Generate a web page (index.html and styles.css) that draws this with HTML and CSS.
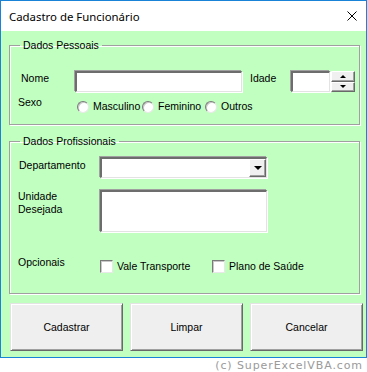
FILE: index.html
```html
<!DOCTYPE html>
<html lang="pt">
<head>
<meta charset="utf-8">
<title>Cadastro de Funcionário</title>
<link rel="stylesheet" href="styles.css">
</head>
<body>
<div class="window">
  <div class="titlebar">
    <span class="title">Cadastro de Funcionário</span>
    <svg class="close" width="10" height="10" viewBox="0 0 10 10"><path d="M0.5 0.5L9.5 9.5M9.5 0.5L0.5 9.5" stroke="#000" stroke-width="1" fill="none"/></svg>
  </div>
  <div class="content">
    <fieldset class="group group-pessoais">
      <legend>Dados Pessoais</legend>
      <div class="row row-nome">
        <span class="lbl lbl-nome">Nome</span>
        <span class="field field-nome"></span>
        <span class="lbl lbl-idade">Idade</span>
        <span class="field field-idade"></span>
        <span class="spin">
          <span class="spin-btn"><span class="tri-up"></span></span>
          <span class="spin-btn"><span class="tri-down"></span></span>
        </span>
      </div>
      <div class="row row-sexo">
        <span class="lbl lbl-sexo">Sexo</span>
        <span class="opts">
          <span class="opt opt-1"><span class="radio"></span>Masculino</span>
          <span class="opt opt-2"><span class="radio"></span>Feminino</span>
          <span class="opt opt-3"><span class="radio"></span>Outros</span>
        </span>
      </div>
    </fieldset>
    <fieldset class="group group-prof">
      <legend>Dados Profissionais</legend>
      <div class="row row-dep">
        <span class="lbl lbl-wide lbl-dep">Departamento</span>
        <span class="field combo"><span class="combo-btn"><span class="tri-down big"></span></span></span>
      </div>
      <div class="row row-uni">
        <span class="lbl lbl-wide">Unidade<br>Desejada</span>
        <span class="field area"></span>
      </div>
      <div class="row row-opc">
        <span class="lbl lbl-wide">Opcionais</span>
        <span class="opts">
          <span class="opt chk-1"><span class="check"></span>Vale Transporte</span>
          <span class="opt chk-2"><span class="check"></span>Plano de Saúde</span>
        </span>
      </div>
    </fieldset>
    <div class="buttons">
      <span class="btn">Cadastrar</span>
      <span class="btn">Limpar</span>
      <span class="btn">Cancelar</span>
    </div>
  </div>
</div>
<div class="credit">(c) SuperExcelVBA.com</div>
</body>
</html>
```

FILE: styles.css
```css
* { box-sizing: border-box; }

body {
  margin: 0;
  background: #fff;
  font-family: "Liberation Sans", Arial, sans-serif;
  font-size: 10.5px;
  color: #000;
}

.window {
  width: 367px;
  border: 1px solid #1883d7;
  background: #fff;
}

.titlebar {
  height: 30px;
  display: flex;
  align-items: center;
  justify-content: space-between;
  padding: 0 9px 0 8px;
  background: #fff;
}

.title {
  font-family: "Noto Sans", "Open Sans", sans-serif;
  font-size: 11.4px;
  color: #000;
}

.close { display: block; }

.content {
  background: #c0ffc0;
  height: 326px;
  padding: 8px 0 0 8px;
}

.group {
  margin: 0;
  width: 351px;
  padding: 0;
  border: 1px solid #a0a0a0;
  box-shadow: 1px 1px 0 #fff, inset 1px 1px 0 #fff;
  min-width: 0;
}

.group legend {
  margin-left: 10px;
  padding: 0 3px;
  line-height: 13px;
  font-size: 10.5px;
}

.group-pessoais { padding: 19px 0 11px 0; }
.group-prof { margin-top: 10px; padding: 9px 0 20px 0; }

.row {
  display: flex;
  align-items: flex-start;
  line-height: 13px;
}

.lbl { display: block; }

.row-nome { padding-left: 11px; height: 21px; }
.lbl-nome { width: 54px; margin-top: 1px; }
.lbl-idade { width: 41px; margin-left: 8px; margin-top: 1px; }

.field {
  display: block;
  background: #fff;
  border-style: solid;
  border-width: 2px 1px 1px 2px;
  border-color: #6d6d6d #e3e3e3 #e3e3e3 #6d6d6d;
  box-shadow: -1px -1px 0 #a0a0a0, 1px 1px 0 #fff;
}

.field-nome { width: 167px; height: 21px; }
.field-idade { width: 39px; height: 21px; }

.spin {
  display: flex;
  flex-direction: column;
  width: 24px;
  height: 21px;
  margin-left: 1px;
}

.spin-btn {
  flex: 1;
  display: flex;
  align-items: center;
  justify-content: center;
  background: #f0f0f0;
  border: 1px solid;
  border-color: #fff #696969 #696969 #fff;
  box-shadow: inset -1px -1px 0 #a0a0a0;
}

.tri-up {
  width: 0; height: 0;
  border-left: 3px solid transparent;
  border-right: 3px solid transparent;
  border-bottom: 3px solid #000;
}

.tri-down {
  width: 0; height: 0;
  border-left: 3px solid transparent;
  border-right: 3px solid transparent;
  border-top: 3px solid #000;
}

.tri-down.big {
  border-left-width: 4px;
  border-right-width: 4px;
  border-top-width: 4px;
}

.row-sexo { padding-left: 8px; margin-top: 4px; }
.lbl-sexo { width: 59px; }

.opts { display: flex; margin-top: 4px; }

.opt {
  display: flex;
  align-items: center;
  white-space: nowrap;
}

.opt-1 { width: 65px; }
.opt-2 { width: 63px; }

.radio {
  display: block;
  width: 12px;
  height: 12px;
  margin-right: 4px;
  border-radius: 50%;
  background: #fff;
  border: 1px solid;
  border-color: #7a7a7a #e8e8e8 #e8e8e8 #7a7a7a;
  box-shadow: inset 1px 1px 0 #c8c8c8;
}

.check {
  display: block;
  width: 13px;
  height: 13px;
  margin-right: 4px;
  background: #fff;
  border: 1px solid;
  border-color: #7a7a7a #e8e8e8 #e8e8e8 #7a7a7a;
  box-shadow: inset 1px 1px 0 #c8c8c8;
}

.row-dep, .row-uni, .row-opc { padding-left: 8px; }
.lbl-wide { width: 82px; }
.lbl-dep { margin-top: 2px; padding-left: 1px; }

.combo {
  width: 167px;
  height: 21px;
  display: flex;
  justify-content: flex-end;
  align-items: stretch;
  padding: 0;
}

.combo-btn {
  width: 17px;
  display: flex;
  align-items: center;
  justify-content: center;
  background: #f0f0f0;
  border: 1px solid;
  border-color: #fff #696969 #696969 #fff;
  box-shadow: inset -1px -1px 0 #a0a0a0;
}

.row-uni { margin-top: 12px; }
.area { width: 167px; height: 42px; }

.row-opc { margin-top: 24px; }
.row-opc .opts { margin-top: 4px; }
.chk-1 { width: 112px; }

.buttons {
  display: flex;
  gap: 7px;
  margin-top: 9px;
  padding-left: 1px;
}

.btn {
  width: 113px;
  height: 48px;
  display: flex;
  align-items: center;
  justify-content: center;
  background: #efefef;
  border: 1px solid;
  border-color: #e3e3e3 #696969 #696969 #e3e3e3;
  box-shadow: inset 1px 1px 0 #fff, inset -1px -1px 0 #a0a0a0;
  font-size: 10.5px;
}

.credit {
  text-align: right;
  padding-right: 4px;
  margin-top: 1px;
  font-family: "DejaVu Sans", Verdana, sans-serif;
  font-size: 11px;
  line-height: 13px;
  color: #9a9a9a;
  letter-spacing: 0.9px;
}
```
